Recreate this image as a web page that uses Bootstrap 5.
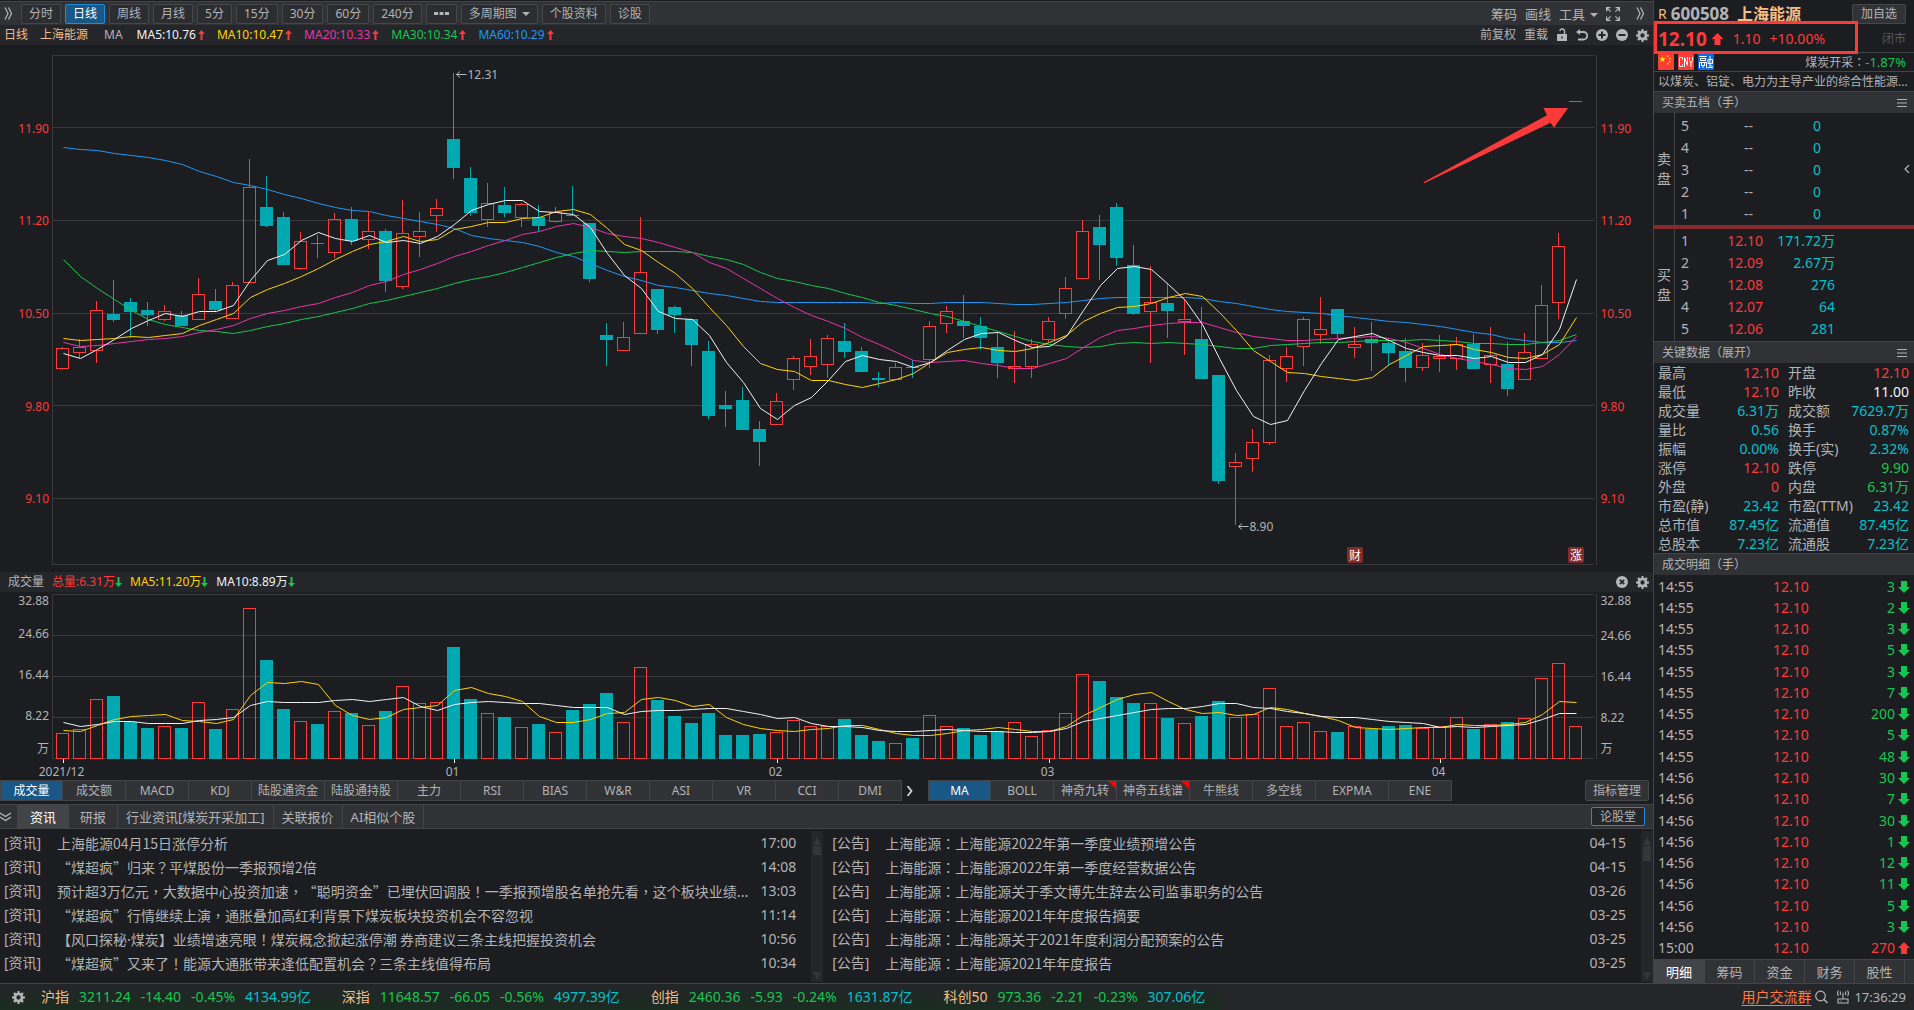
<!DOCTYPE html>
<html lang="zh-CN">
<head>
<meta charset="utf-8">
<meta name="viewport" content="width=device-width, initial-scale=1">
<title>上海能源 600508</title>
<link href="https://cdn.jsdelivr.net/npm/bootstrap@5.3.0/dist/css/bootstrap.min.css" rel="stylesheet">
<style>
:root{--bg:#1c1d21;--bar:#313236;--bar2:#25262a;--edge:#434448;--txt:#b2b3b5;--red:#fc3a39;--grn:#14c651;--cyan:#00c1cb;--peach:#f4bd85;--blue:#1e98f5;--yel:#ffd200;--mag:#e536a8}
body{background:var(--bg);color:var(--txt);font-family:"Noto Sans","Noto Sans CJK SC",sans-serif;font-size:14px;line-height:18px;text-spacing-trim:space-all}
a{color:inherit;text-decoration:none}
button{color:inherit;font:inherit}
svg{display:block;flex:none}
.c-red{color:var(--red)}.c-grn{color:var(--grn)}.c-cyan{color:var(--cyan)}.c-peach{color:var(--peach)}.c-blue{color:var(--blue)}.c-yel{color:var(--yel)}.c-mag{color:var(--mag)}.c-wht{color:#f2f2f2}
.f12{font-size:12px}.f13{font-size:13px}
.punct{font-family:"Noto Sans CJK TC",sans-serif}
.dot{font-family:"Noto Sans",sans-serif}
.toolbar{height:24px;margin-top:1px;background:var(--bar);border-top:1px solid var(--edge);font-size:12px}
.toolbar .btn,.mgr{height:20px;padding:0 7px;border:1px solid #46474b;border-radius:2px;background:#2c2d31;color:var(--txt);font-size:12px;line-height:16px}
.toolbar .btn.active{background:#195787;border-color:#2089d8;color:#fff}
.caret{display:inline-block;border:4px solid transparent;border-top-color:currentColor;border-bottom:0;margin-left:5px;vertical-align:2px}
.plain{border:0;background:none;padding:0}
.legendbar{height:20px;background:var(--bar2);font-size:12px}
.malist{gap:12px;margin-left:14px}
.malist span{gap:2px}
.chart{width:100%}
.chart text{font-size:12px;fill:var(--txt)}
.chart .pr{fill:var(--red)}
.chart .flag{fill:#fff}
#price{height:527px}
#volume{height:188px}
.inds{height:21px;font-size:12px}
.indset{border:1px solid var(--edge);border-left:0;background:var(--bar);height:21px}
.indset button{border:0;border-left:1px solid var(--edge);background:none;padding:0;width:63px;line-height:18px;position:relative}
.indset .on{background:#195787;color:#fff;width:62px}
.indset .w74{width:73px}
.indset .hot::after{content:"";position:absolute;top:0;right:0;border:4px solid red;border-left-color:transparent;border-bottom-color:transparent}
.nextind{margin:0 14px 0 4px}
.mgr{height:21px;padding:0 7px;background:var(--bar)}
.newstabs{height:25px;margin-top:3px;background:var(--bar);border:1px solid var(--edge);border-width:1px 0;font-size:13px}
.newstabs .tabbtn{border:0;border-right:1px solid var(--edge);background:none;padding:0 11px;height:23px}
.newstabs .tabbtn.on{background:#434448;color:#fff;border-right:0;width:52px}
.newstabs .wide{padding:0 8px}
.forum{border:1px solid #2089d8;border-radius:2px;background:var(--bar2);font-size:12px;height:19px;line-height:16px;padding:0 8px}
.newscol{min-width:0}
.newscol.one{flex:0 0 49.8%}
.newscol.two{flex:1 1 0}
.newscol ul{min-width:0;padding:2px 15px 0 4px}
.newscol.two ul{padding-left:9px}
.newscol li,.newscol a{display:flex;height:24px;line-height:24px;width:100%}
.newscol .kind{width:53px;flex:none}
.newscol .ttl{flex:1 1 0;min-width:0;white-space:nowrap;overflow:hidden;font-family:"Noto Sans CJK SC",sans-serif}
.sbar{width:12px;margin:2px 0 1px;background:var(--bar2);color:#35363b;flex:none}
.sbar i{display:block;border:4px solid transparent;border-bottom:8px solid #35363b;border-top:0;margin-top:6px}
.sbar i.dn{border-bottom:0;border-top:8px solid #35363b;margin:0 0 2px}
.sbar b{display:block;width:8px;height:9px;background:#35363b;margin-top:1px}
.sbar b.big{height:15px}
.side{width:261px;flex:none;border-left:1px solid var(--edge);padding-top:2px}
.titlerow{height:24px}
.titlerow .mgr{height:20px;padding:0 8px}
.codeno{font-size:17px;font-weight:700}
.sname{font-size:16px;font-weight:700}
.pricerow{height:27px;border-bottom:1px solid var(--edge)}
.bigp{font-size:19px;font-weight:700}
.chg{gap:9px;margin-left:9px}
.shut{color:#58595d}
.callout{position:absolute;left:0;top:-5px;width:204px;height:33px;border:3px solid var(--red)}
.tagrow{height:19px;border-bottom:1px solid var(--edge)}
.tagbox{width:16px;height:16px}
.descrow{height:19px;font-size:12px;line-height:20px;white-space:nowrap;overflow:hidden}
.sechead{height:22px;border-top:1px solid var(--edge);background:var(--bar);font-size:12px;padding:0 7px 0 8px}
.bookside{width:21px;border-right:1px solid var(--edge);font-size:14px;line-height:20px;flex:none}
.booktbl{width:160px;table-layout:fixed;margin:1px 0}
.booktbl td{padding:0;height:22px;line-height:22px;text-align:right}
.booktbl td:first-child{text-align:left;padding-left:6px;width:30px}
.booktbl td:nth-child(2){width:58px}
.booktbl.asks{margin:2px 0 0}
.booktbl.asks td:nth-child(2){padding-right:10px}
.booktbl.asks td:nth-child(3){padding-right:14px}
.split{height:4px;background:#842a2c}
.keytbl{width:100%;table-layout:fixed}
.keytbl td,.keytbl th{padding:0;height:19px;line-height:19px;font-weight:400;white-space:nowrap}
.keytbl td{text-align:right;padding-right:5px}
.keytbl th{padding-left:4px}
.keytbl .k1{width:56px}.keytbl .v1{width:74px}.keytbl .k2{width:60px}
.tradewrap{padding-top:1px}
.tradetbl{width:100%;flex:1 1 auto;table-layout:fixed}
.tradetbl td{padding:0;line-height:18px;vertical-align:middle}
.tradetbl td:first-child{padding-left:4px;width:119px}
.tradetbl td:last-child{text-align:right;padding-right:4px}
.tradetbl svg{display:inline-block;margin-left:3px;vertical-align:-1px}
.sidetabs{height:24px;border-top:1px solid var(--edge);background:var(--bar);font-size:13px}
.sidetabs button{border:0;border-right:1px solid var(--edge);background:none;width:50px;padding:0}
.sidetabs .on{background:#434448;color:#fff;width:51px}
.statusbar{height:27px;border-top:1px solid var(--edge);background:var(--bar2)}
.indices{background:linear-gradient(#232528,#1b2c20);padding:0 16px 0 12px}
.quote{gap:10px;margin-right:31px}
.grouplink{color:#ff7a3e;text-decoration:underline;text-underline-offset:3px}
</style>
<script src="https://cdn.jsdelivr.net/npm/bootstrap@5.3.0/dist/js/bootstrap.bundle.min.js"></script>
</head>
<body class="d-flex flex-column min-vh-100">
<svg width="0" height="0" class="position-absolute" aria-hidden="true">
  <symbol id="gear" viewBox="0 0 14 14"><path fill="currentColor" fill-rule="evenodd" d="M6 0h2l.3 1.9 1.2.5L11 1.300l1.600 1.600-1.100 1.600.5 1.200L14 6v2l-1.900.3-.5 1.200 1.100 1.500-1.600 1.600-1.600-1.100-1.200.5L8 14H6l-.3-1.900-1.200-.5L3 12.700 1.300 11.100l1.100-1.600-.5-1.200L0 8V6l1.900-.3.5-1.200L1.300 3 2.900 1.300l1.600 1.100 1.200-.5zM7 4.700a2.300 2.300 0 1 0 0 4.600 2.300 2.300 0 0 0 0-4.600z"/></symbol>
  <symbol id="up" viewBox="0 0 7 12"><path fill="#fc3a39" d="M3.500 1L7 5H4.500v6h-2V5H0z"/></symbol>
  <symbol id="down" viewBox="0 0 7 12"><path fill="#14c651" d="M3.500 11L7 7H4.500V1h-2v6H0z"/></symbol>
  <symbol id="fatdown" viewBox="0 0 12 12"><path fill="#14c651" d="M3 0h6v6h3L6 12 0 6h3z"/></symbol>
  <symbol id="fatup" viewBox="0 0 12 12"><path fill="#fc3a39" d="M3 12h6V6h3L6 0 0 6h3z"/></symbol>
  <symbol id="burger" viewBox="0 0 10 8"><path stroke="currentColor" d="M0 .5h10M0 4h10M0 7.500h10"/></symbol>
  <symbol id="chev2" viewBox="0 0 9 13"><path fill="none" stroke="currentColor" stroke-width="1.300" d="M1 .5l3 6-3 6M4.500.5l3 6-3 6"/></symbol>
</svg>

<div class="d-flex flex-grow-1">
<main class="d-flex flex-column flex-fill overflow-hidden">
  <div class="toolbar d-flex align-items-center gap-1">
    <svg width="9" height="13" class="mx-1"><use href="#chev2"/></svg>
    <button class="btn">分时</button>
    <button class="btn active">日线</button>
    <button class="btn">周线</button>
    <button class="btn">月线</button>
    <button class="btn">5分</button>
    <button class="btn">15分</button>
    <button class="btn">30分</button>
    <button class="btn">60分</button>
    <button class="btn">240分</button>
    <button class="btn" aria-label="更多"><svg width="15" height="4"><path fill="#b6b7b9" d="M0 0h4v3H0zM5.500 0h4v3h-4zM11 0h4v3h-4z"/></svg></button>
    <button class="btn">多周期图<span class="caret"></span></button>
    <button class="btn">个股资料</button>
    <button class="btn">诊股</button>
    <div class="ms-auto d-flex align-items-center gap-2 f13">
      <button class="plain">筹码</button>
      <button class="plain">画线</button>
      <button class="plain">工具<span class="caret"></span></button>
      <button class="plain" aria-label="全屏"><svg width="14" height="14"><path fill="none" stroke="#b6b7b9" stroke-width="1.200" d="M.6 4.500V.6h3.900M.6.6l4 4M9.500.6h3.900v3.900M13.400.6l-4 4M.6 9.500v3.900h3.900M.6 13.400l4-4M9.500 13.400h3.900V9.500M13.400 13.400l-4-4"/></svg></button>
      <svg width="9" height="13" class="mx-2"><use href="#chev2"/></svg>
    </div>
  </div>

  <div class="legendbar d-flex align-items-center">
    <span class="c-peach ms-1">日线</span><span class="c-peach ms-2 ps-1">上海能源</span><span class="ms-3">MA</span>
    <span class="malist d-flex align-items-center">
      <span class="c-wht d-flex align-items-center">MA5:10.76<svg width="7" height="12"><use href="#up"/></svg></span>
      <span class="c-yel d-flex align-items-center">MA10:10.47<svg width="7" height="12"><use href="#up"/></svg></span>
      <span class="c-mag d-flex align-items-center">MA20:10.33<svg width="7" height="12"><use href="#up"/></svg></span>
      <span class="c-grn d-flex align-items-center">MA30:10.34<svg width="7" height="12"><use href="#up"/></svg></span>
      <span class="c-blue d-flex align-items-center">MA60:10.29<svg width="7" height="12"><use href="#up"/></svg></span>
    </span>
    <div class="ms-auto d-flex align-items-center gap-2 me-1">
      <button class="plain">前复权</button>
      <button class="plain">重载</button>
      <svg width="12" height="14"><path fill="#b6b7b9" fill-rule="evenodd" d="M1 6h10v7H1zM5.300 8.500v2h1.400v-2z"/><path fill="none" stroke="#b6b7b9" stroke-width="1.400" d="M8.500 6V3.500a2.300 2.300 0 0 0-4.600-.5"/></svg>
      <svg width="12" height="12"><path fill="none" stroke="#b6b7b9" stroke-width="1.800" d="M3 3h4.500a3.500 3.500 0 0 1 0 7.500H2"/><path fill="#b6b7b9" d="M0 3l4-3v6z"/></svg>
      <svg width="12" height="12"><circle cx="6" cy="6" r="6" fill="#b6b7b9"/><path stroke="#25262a" stroke-width="2" d="M6 2.500v7M2.500 6h7"/></svg>
      <svg width="12" height="12"><circle cx="6" cy="6" r="6" fill="#b6b7b9"/><path stroke="#25262a" stroke-width="2" d="M2.500 6h7"/></svg>
      <svg width="13" height="13"><use href="#gear"/></svg>
    </div>
  </div>

  <svg id="price" class="chart" role="img" aria-label="日K线图"></svg>

  <div class="legendbar d-flex align-items-center gap-2">
    <span class="ms-2">成交量</span>
    <span class="c-red d-flex align-items-center">总量:6.31万<svg width="7" height="12"><use href="#down"/></svg></span>
    <span class="c-yel d-flex align-items-center">MA5:11.20万<svg width="7" height="12"><use href="#down"/></svg></span>
    <span class="c-wht d-flex align-items-center">MA10:8.89万<svg width="7" height="12"><use href="#down"/></svg></span>
    <svg width="12" height="12" class="ms-auto"><circle cx="6" cy="6" r="6" fill="#b6b7b9"/><path stroke="#25262a" stroke-width="1.800" d="M3.800 3.800l4.400 4.400M8.200 3.800L3.800 8.200"/></svg>
    <svg width="13" height="13" class="me-1"><use href="#gear"/></svg>
  </div>

  <svg id="volume" class="chart" role="img" aria-label="成交量图"></svg>

  <div class="inds d-flex align-items-center">
    <div class="indset d-flex">
      <button class="on">成交量</button><button>成交额</button><button>MACD</button><button>KDJ</button><button class="w74">陆股通资金</button><button class="w74">陆股通持股</button><button>主力</button><button>RSI</button><button>BIAS</button><button>W&amp;R</button><button>ASI</button><button>VR</button><button>CCI</button><button>DMI</button>
    </div>
    <svg width="8" height="10" class="nextind"><path fill="none" stroke="#d0d1d3" stroke-width="1.800" d="M1.500 0l4 5-4 5"/></svg>
    <div class="indset d-flex">
      <button class="on">MA</button><button>BOLL</button><button class="hot">神奇九转</button><button class="hot w74">神奇五线谱</button><button>牛熊线</button><button>多空线</button><button class="w74">EXPMA</button><button>ENE</button>
    </div>
    <button class="mgr ms-auto me-1">指标管理</button>
  </div>

  <div class="newstabs d-flex align-items-center">
    <svg width="13" height="10" class="me-1"><path fill="none" stroke="#b6b7b9" stroke-width="1.300" d="M0 1l5.500 3.500L11 1M0 5l5.500 3.500L11 5"/></svg>
    <button class="tabbtn on">资讯</button><button class="tabbtn">研报</button><button class="tabbtn wide">行业资讯[煤炭开采加工]</button><button class="tabbtn wide">关联报价</button><button class="tabbtn wide">AI相似个股</button>
    <button class="forum ms-auto me-2">论股堂</button>
  </div>

  <div class="d-flex flex-grow-1">
    <section class="newscol one d-flex">
      <ul class="list-unstyled flex-fill mb-0">
        <li><a href="#"><span class="kind">[资讯]</span><span class="ttl">上海能源04月15日涨停分析</span><span>17:00</span></a></li>
        <li><a href="#"><span class="kind">[资讯]</span><span class="ttl">“煤超疯”归来？平煤股份一季报预增2倍</span><span>14:08</span></a></li>
        <li><a href="#"><span class="kind">[资讯]</span><span class="ttl">预计超3万亿元，大数据中心投资加速，“聪明资金”已埋伏回调股！一季报预增股名单抢先看，这个板块业绩...</span><span>13:03</span></a></li>
        <li><a href="#"><span class="kind">[资讯]</span><span class="ttl">“煤超疯”行情继续上演，通胀叠加高红利背景下煤炭板块投资机会不容忽视</span><span>11:14</span></a></li>
        <li><a href="#"><span class="kind">[资讯]</span><span class="ttl">【风口探秘<span class="dot">·</span>煤炭】业绩增速亮眼！煤炭概念掀起涨停潮 券商建议三条主线把握投资机会</span><span>10:56</span></a></li>
        <li><a href="#"><span class="kind">[资讯]</span><span class="ttl">“煤超疯”又来了！能源大通胀带来逢低配置机会？三条主线值得布局</span><span>10:34</span></a></li>
      </ul>
      <div class="sbar d-flex flex-column align-items-center"><i></i><b></b><i class="dn mt-auto"></i></div>
    </section>
    <section class="newscol two d-flex">
      <ul class="list-unstyled flex-fill mb-0">
        <li><a href="#"><span class="kind">[公告]</span><span class="ttl">上海能源：上海能源2022年第一季度业绩预增公告</span><span>04-15</span></a></li>
        <li><a href="#"><span class="kind">[公告]</span><span class="ttl">上海能源：上海能源2022年第一季度经营数据公告</span><span>04-15</span></a></li>
        <li><a href="#"><span class="kind">[公告]</span><span class="ttl">上海能源：上海能源关于季文博先生辞去公司监事职务的公告</span><span>03-26</span></a></li>
        <li><a href="#"><span class="kind">[公告]</span><span class="ttl">上海能源：上海能源2021年年度报告摘要</span><span>03-25</span></a></li>
        <li><a href="#"><span class="kind">[公告]</span><span class="ttl">上海能源：上海能源关于2021年度利润分配预案的公告</span><span>03-25</span></a></li>
        <li><a href="#"><span class="kind">[公告]</span><span class="ttl">上海能源：上海能源2021年年度报告</span><span>03-25</span></a></li>
      </ul>
      <div class="sbar d-flex flex-column align-items-center"><i></i><b class="big"></b><i class="dn mt-auto"></i></div>
    </section>
  </div>
</main>

<aside class="side d-flex flex-column">
  <div class="titlerow d-flex align-items-center">
    <span class="c-peach ms-1">R</span><span class="codeno ms-1">600508</span><span class="sname c-peach ms-2">上海能源</span>
    <button class="mgr ms-auto me-2">加自选</button>
  </div>
  <div class="pricerow d-flex align-items-center c-red position-relative">
    <span class="bigp ms-1">12.10</span>
    <svg width="13" height="12" class="ms-1" viewBox="0 0 12 12"><use href="#fatup" width="12" height="12"/></svg>
    <span class="chg d-flex"><span>1.10</span><span>+10.00%</span></span>
    <span class="f12 ms-auto me-2 shut">闭市</span>
    <span class="callout"></span>
  </div>
  <div class="tagrow d-flex align-items-center gap-1 ps-1">
    <svg class="tagbox" viewBox="0 0 16 16"><rect width="16" height="16" rx="1" fill="#fb3e33"/><path fill="#ffe300" d="M4.500 2l.9 2.200 2.300.1-1.800 1.500.6 2.200-2-1.200-2 1.200.6-2.200L1.300 4.300l2.300-.1zM9 1.500h1.500V3H9zM11 4h1.500v1.500H11zM11 7h1.500v1.500H11zM9 9h1.500v1.500H9z"/></svg>
    <svg class="tagbox" viewBox="0 0 16 16"><rect width="16" height="16" rx="1" fill="#fb3e33"/><path fill="none" stroke="#fff" d="M4.500 5.500V3.500h-3v9h3v-2M6.500 13V3.500l3 8V3M11.500 3v3.500l1.500 2 1.500-2V3M13 8v5"/></svg>
    <svg class="tagbox" viewBox="0 0 16 16"><rect width="16" height="16" rx="1" fill="#0d6ae0"/><path fill="none" stroke="#fff" d="M1.500 2.500h7M2.500 4.500h5v2h-5zM1.500 14V8.500h7V14M3.500 9v2M6.500 9v2M3 11.500h4M5 12v2M12 2v11M10 5.500h4.500v4H10zM9.500 13.500h5M13.500 11.500l1 2"/></svg>
    <span class="f12 ms-auto me-1 pe-1"><span class="sector">煤炭开采：</span><span class="c-grn f13">-1.87%</span></span>
  </div>
  <div class="descrow px-1">以煤炭、铝锭、电力为主导产业的综合性能源...</div>
  <div class="sechead d-flex align-items-center justify-content-between">买卖五档（手）<svg width="10" height="8"><use href="#burger"/></svg></div>
  <div class="d-flex">
    <div class="bookside d-flex flex-column justify-content-center align-items-center"><span>卖</span><span>盘</span></div>
    <table class="booktbl asks"><tbody id="asks"></tbody></table>
    <svg width="6" height="8" class="ms-auto me-1 align-self-center"><path fill="none" stroke="#b6b7b9" stroke-width="1.200" d="M5 0L1 4l4 4"/></svg>
  </div>
  <div class="split"></div>
  <div class="d-flex">
    <div class="bookside d-flex flex-column justify-content-center align-items-center"><span>买</span><span>盘</span></div>
    <table class="booktbl"><tbody id="bids"></tbody></table>
  </div>
  <div class="sechead d-flex align-items-center justify-content-between">关键数据（展开）<svg width="10" height="8"><use href="#burger"/></svg></div>
  <table class="keytbl">
    <colgroup><col class="k1"><col class="v1"><col class="k2"><col></colgroup>
    <tbody id="keys"></tbody>
  </table>
  <div class="sechead d-flex align-items-center">成交明细（手）</div>
  <div class="tradewrap d-flex flex-column flex-grow-1"><table class="tradetbl"><tbody id="trades"></tbody></table></div>
  <div class="sidetabs d-flex"><button class="on">明细</button><button>筹码</button><button>资金</button><button>财务</button><button>股性</button></div>
</aside>
</div>

<footer class="statusbar d-flex align-items-center">
  <div class="indices d-flex align-items-center h-100">
    <svg width="13" height="13" class="me-3"><use href="#gear"/></svg>
    <span class="d-flex quote"><span class="c-peach">沪指</span><span class="c-grn">3211.24</span><span class="c-grn">-14.40</span><span class="c-grn">-0.45%</span><span class="c-cyan">4134.99亿</span></span>
    <span class="d-flex quote"><span class="c-peach">深指</span><span class="c-grn">11648.57</span><span class="c-grn">-66.05</span><span class="c-grn">-0.56%</span><span class="c-cyan">4977.39亿</span></span>
    <span class="d-flex quote"><span class="c-peach">创指</span><span class="c-grn">2460.36</span><span class="c-grn">-5.93</span><span class="c-grn">-0.24%</span><span class="c-cyan">1631.87亿</span></span>
    <span class="d-flex quote me-0"><span class="c-peach">科创50</span><span class="c-grn">973.36</span><span class="c-grn">-2.21</span><span class="c-grn">-0.23%</span><span class="c-cyan">307.06亿</span></span>
  </div>
  <a href="#" class="grouplink ms-auto">用户交流群</a>
  <svg width="13" height="14" class="ms-1"><circle cx="5.500" cy="6" r="4.800" fill="none" stroke="#b6b7b9" stroke-width="1.200"/><path stroke="#b6b7b9" stroke-width="1.400" d="M9 9.500l3.500 3.500"/></svg>
  <svg width="14" height="14" class="ms-2"><path fill="none" stroke="#b6b7b9" stroke-width="1.100" d="M2 9h10v4H2zM4.500 11h1M7 9V2.500M4.700 1.500q-1 1.800 0 3.500M9.300 1.500q1 1.800 0 3.500M2.500.5q-2 2.700 0 5.500M11.500.5q2 2.700 0 5.500"/></svg>
  <span class="f13 ms-1 me-1 pe-1">17:36:29</span>
</footer>

<script>
// Candles: rising flag, then high, body top, body bottom, low (stage pixels)
const K=`1 347 348.5 368.5 370|1 339 347.5 352.5 358|1 301 310.5 350.5 363|0 280 314 320 322|0 298 302 312 338|0 302 310 315 326|1 305 311.5 319.5 321.5|0 311 315 326 326|1 278 294.5 319.5 319.5|0 289 301 310 312|1 282 285.5 318.5 318.5|1 159 187.5 282.5 282.5|0 176 207 226 227|0 212 217 265 265|1 232 241.5 268.5 270|0 235 243 244 258|1 213 219.5 252.5 258|0 207 219 241 245|1 212 231.5 239.5 249|0 229 231 281 292|1 200 233.5 286.5 289|1 212 231.5 236.5 257|1 199 208.5 215.5 232|0 73 139 168 179|0 167 178 213 216|1 183 203.5 219.5 227|0 187 205 213 217|1 203 204.5 217.5 227|0 205 217 226 231|1 207 212.5 221.5 222.5|0 186 215 216 216|0 223 223 279 282|0 323 335 340 366|1 322 337.5 350.5 350.5|1 217 272.5 333.5 333.5|0 289 289 330 334|0 306 307 315 333|0 319 319 345 366|0 341 351 416 419|0 391 405 409 427|0 387 400 430 430|0 421 429 442 466|1 393 401.5 424.5 424.5|1 356 358.5 379.5 390|1 339 356.5 366.5 375|1 335 338.5 364.5 378|0 323 341 352 358|0 347 351 372 372|0 372 378 380 387|1 363 367.5 379.5 379.5|0 360 367 368 378|1 321 326.5 359.5 368|1 306 311.5 323.5 333|0 295 321 326 338|0 317 326 338 350|0 333 347 363 378|1 331 366.5 368.5 383|1 339 344.5 366.5 378|1 317 321.5 339.5 342|1 277 288.5 313.5 319|1 220 231.5 278.5 278.5|0 215 227 245 280|0 203 207 258 266|0 245 265 314 315|1 266 302.5 311.5 363|0 284 303 311 338|1 300 319.5 321.5 355|0 307 339 379 379|0 375 375 481 484|1 453 462.5 466.5 525|1 429 442.5 458.5 472|1 355 360.5 442.5 445|1 347 356.5 368.5 382|1 317 319.5 346.5 366|1 297 329.5 334.5 344|0 309 309 334 339|1 327 344.5 347.5 358|0 322 339 343 371|0 340 343 353 365|0 338 351 368 382|1 343 355.5 367.5 371|1 335 356.5 358.5 372|1 337 344.5 358.5 370|0 334 344 369 369|1 327 355.5 364.5 383|0 342 364 389 396|1 333 352.5 379.5 379.5|1 285 305.5 358.5 358.5|1 233 246.5 302.5 319|1 101.5 101.5 101.5 101.5`.split("|").map(s=>s.split(" ").map(Number));
const MA={
"#1e98f5":[147,149,150,153,155,157,160,164,171,176,182,185,189,194,198,203,207,210,211,215,218,221,224,228,235,238,240,242,246,252,256,263,270,276,280,285,287,290,293,295,298,301,302,302,302,302,302,302,303,302,303,303,302,302,302,303,304,304,303,302,300,298,297,297,297,297,297,298,301,303,306,309,311,312,313,315,317,319,321,322,324,326,329,332,334,338,340,342,342,340],
"#14c651":[259,276,288,299,310,319,324,327,330,331,333,330,326,323,319,316,312,308,303,300,296,292,288,283,279,276,272,267,262,257,253,250,251,252,251,251,251,252,256,259,264,272,278,281,285,288,293,297,302,305,309,313,316,321,326,331,336,341,344,346,347,346,343,342,343,342,343,344,346,348,348,345,344,343,342,342,341,340,340,340,339,340,341,343,343,344,344,342,340,334],
"#e536a8":[342,346,345,343,341,339,338,336,332,329,325,318,313,310,306,303,297,292,285,281,274,269,263,256,251,245,240,234,231,226,223,227,233,236,238,242,247,252,262,268,278,288,298,307,315,321,328,337,344,352,360,362,361,360,363,365,368,368,363,358,347,337,330,328,325,323,322,322,327,332,336,338,340,340,339,338,337,336,338,342,348,354,358,361,364,368,369,366,354,336],
"#ffd200":[338,340,339,338,336,337,335,333,325,319,313,297,289,283,276,268,259,251,244,241,236,241,239,229,226,222,222,218,217,211,209,214,228,244,250,262,273,288,307,325,346,363,369,371,380,380,384,387,383,379,373,362,352,349,347,350,351,348,342,335,321,313,307,306,303,297,293,296,312,330,350,361,372,373,376,378,380,377,364,355,346,345,344,349,352,357,358,354,344,317],
"#f2f2f2":[353,358,349,339,328,320,313,316,311,311,305,280,260,254,240,232,238,241,235,242,240,243,236,224,210,204,200,200,211,212,214,227,253,275,288,311,318,319,335,362,382,408,419,405,397,380,361,355,359,361,367,362,350,339,333,332,340,347,346,336,310,285,268,266,269,284,300,324,358,390,416,424,420,390,363,339,336,333,340,348,352,355,355,358,356,362,362,354,329,279]
};
const V=[733,729,699,696,722,728,726,728,702,729,709,608,660,709,721,724,711,713,725,711,686,703,702,647,699,713,717,727,724,732,710,704,693,722,667,700,716,723,713,735,735,734,732,720,726,726,719,735,741,743,738,715,726,728,735,731,722,736,730,713,674,681,697,703,703,718,723,716,701,717,714,688,726,722,731,732,726,729,726,725,728,726,717,729,724,722,718,678,663,726];
const VM={
"#ffd200":[730,731,725,719,716,715,714,720,721,723,719,695,682,683,681,684,705,715,719,717,709,707,705,690,687,693,696,701,716,722,722,719,713,712,699,697,700,706,704,717,724,728,730,731,729,728,725,725,729,733,735,735,733,730,729,727,729,731,731,726,715,707,699,694,692,701,709,713,712,715,714,707,709,713,716,720,727,728,729,728,727,727,724,725,725,724,722,714,701,702],
"#f2f2f2":[722,726,724,721,721,723,723,723,720,719,717,705,701,702,702,702,700,699,701,699,697,706,710,704,702,701,702,703,703,705,707,707,707,714,711,710,710,709,708,708,711,714,718,717,723,726,726,727,730,731,731,730,729,730,731,731,732,732,731,728,721,718,715,712,709,708,708,706,703,703,707,708,711,713,716,717,717,719,721,722,723,727,726,727,726,725,724,719,713,713]
};
const R="#fc3a39",T="#00a8b2",G="#38393d";
const line=(a,b,c,d,s)=>`<path d="M${a} ${b}L${c} ${d}" stroke="${s}" fill="none"/>`;
const text=(x,y,t,a="start",c="")=>`<text x="${x}" y="${y}" text-anchor="${a}" class="${c}">${t}</text>`;
const curve=(ys,s,X)=>`<polyline fill="none" stroke="${s}" points="${ys.map((y,i)=>(X(i)+1)+","+(y+.5)).join(" ")}"/>`;
function draw(){
  const p=document.getElementById("price"),v=document.getElementById("volume"),W=p.clientWidth;
  const step=(W-140)/89,X=i=>Math.round(62+step*i)+.5,r=W-57+.5;
  let s='<g transform="translate(0,-45)">';
  [55.5,127.5,220.5,313.5,405.5,498.5,564.5].forEach(y=>s+=line(52,y,r-2,y,G));
  s+=line(52.5,55,52.5,565,G)+line(r,55,r,565,G);
  [[133,"11.90"],[225,"11.20"],[318,"10.50"],[411,"9.80"],[503,"9.10"]].forEach(([y,t])=>s+=text(49,y,t,"end","pr")+text(r+4,y,t,"start","pr"));
  K.forEach(([u,h,t,b,l],i)=>{const x=X(i);
    if(t===b){s+=line(x-6.5,t,x+6.5,t,R);return}
    if(u){s+=`<rect x="${x-6}" y="${t}" width="12" height="${b-t}" fill="none" stroke="${R}"/>`;
      s+=line(x,h,x,t,R)+line(x,b,x,l,R)}
    else s+=`<rect x="${x-6.5}" y="${t}" width="13" height="${b-t}" fill="${T}"/>`+line(x,h,x,l,T)});
  for(const c in MA)s+=curve(MA[c],c,X);
  const mark=(i,y,t)=>{const x=X(i);return `<path d="M${x+13} ${y}h-10m3.500-3l-3.500 3 3.500 3" fill="none" stroke="#b6b7b9"/>`+text(x+14,y+4,t)};
  s+=mark(23,74.5,"12.31")+mark(69,526.5,"8.90");
  [[76,"财"],[89,"涨"]].forEach(([i,t])=>s+=`<rect x="${X(i)-7.5}" y="547" width="16" height="16" rx="2" fill="#842a2c"/>`+text(X(i)+.5,559.5,t,"middle","flag"));
  const a=X(89)-1575;
  s+=`<path transform="translate(${a},0)" fill="${R}" d="M1567.500 108L1543 108l3.500 7.200L1423 182.200l.7 1L1550 122.700l3.500 5z"/>`;
  p.innerHTML=s+"</g>";
  s='<g transform="translate(0,-592)">';
  [594.5,635.5,676.5,717.5,758.5].forEach(y=>s+=line(52,y,r-2,y,G));
  s+=line(52.5,594,52.5,759,G)+line(r,594,r,759,G);
  [[605,"32.88"],[638,"24.66"],[679,"16.44"],[720,"8.22"],[753,"万"]].forEach(([y,t])=>s+=text(49,y,t,"end"));
  [[605,"32.88"],[640,"24.66"],[681,"16.44"],[722,"8.22"],[753,"万"]].forEach(([y,t])=>s+=text(r+4,y,t));
  V.forEach((y,i)=>{const x=X(i);s+=K[i][0]?`<rect x="${x-6}" y="${y+.5}" width="12" height="${758-y}" fill="none" stroke="${R}"/>`:`<rect x="${x-6.5}" y="${y}" width="13" height="${759-y}" fill="${T}"/>`});
  for(const c in VM)s+=curve(VM[c],c,X);
  [[0,"2021/12"],[23,"01"],[42,"02"],[58,"03"],[81,"04"]].forEach(([i,t])=>s+=line(X(i)+1,759,X(i)+1,763,"#fff")+text(X(i)-1,776,t,"middle"));
  v.innerHTML=s+"</g>";
}
draw();addEventListener("resize",draw);
const $=id=>document.getElementById(id);
$("asks").innerHTML=[5,4,3,2,1].map(n=>`<tr><td>${n}</td><td>--</td><td class="c-cyan">0</td></tr>`).join("");
$("bids").innerHTML=[["12.10","171.72万"],["12.09","2.67万"],["12.08",276],["12.07",64],["12.06",281]].map((a,i)=>`<tr><td>${i+1}</td><td class="c-red">${a[0]}</td><td class="c-cyan">${a[1]}</td></tr>`).join("");
$("keys").innerHTML=`最高 r 12.10 开盘 r 12.10|最低 r 12.10 昨收 w 11.00|成交量 c 6.31万 成交额 c 7629.7万|量比 c 0.56 换手 c 0.87%|振幅 c 0.00% 换手(实) c 2.32%|涨停 r 12.10 跌停 g 9.90|外盘 r 0 内盘 g 6.31万|市盈(静) c 23.42 市盈(TTM) c 23.42|总市值 c 87.45亿 流通值 c 87.45亿|总股本 c 7.23亿 流通股 c 7.23亿`.split("|").map(l=>{const a=l.split(" "),c={r:"c-red",w:"c-wht",c:"c-cyan",g:"c-grn"};return `<tr><th>${a[0]}</th><td class="${c[a[1]]}">${a[2]}</td><th>${a[3]}</th><td class="${c[a[4]]}">${a[5]}</td></tr>`}).join("");
$("trades").innerHTML=[3,2,3,5,3,7,200,5,48,30,7,30,1,12,11,5,3,270].map((n,i)=>`<tr><td>${i<9?"14:55":i<17?"14:56":"15:00"}</td><td class="c-red">12.10</td><td class="${i<17?"c-grn":"c-red"}">${n}<svg width="12" height="12"><use href="#${i<17?"fatdown":"fatup"}"/></svg></td></tr>`).join("");
// Centred full-width punctuation in headlines
document.querySelectorAll(".ttl,.sector").forEach(e=>e.innerHTML=e.innerHTML.replace(/[，：？！]/g,'<span class="punct" lang="zh-TW">$&</span>'));
</script>
</body>
</html>
